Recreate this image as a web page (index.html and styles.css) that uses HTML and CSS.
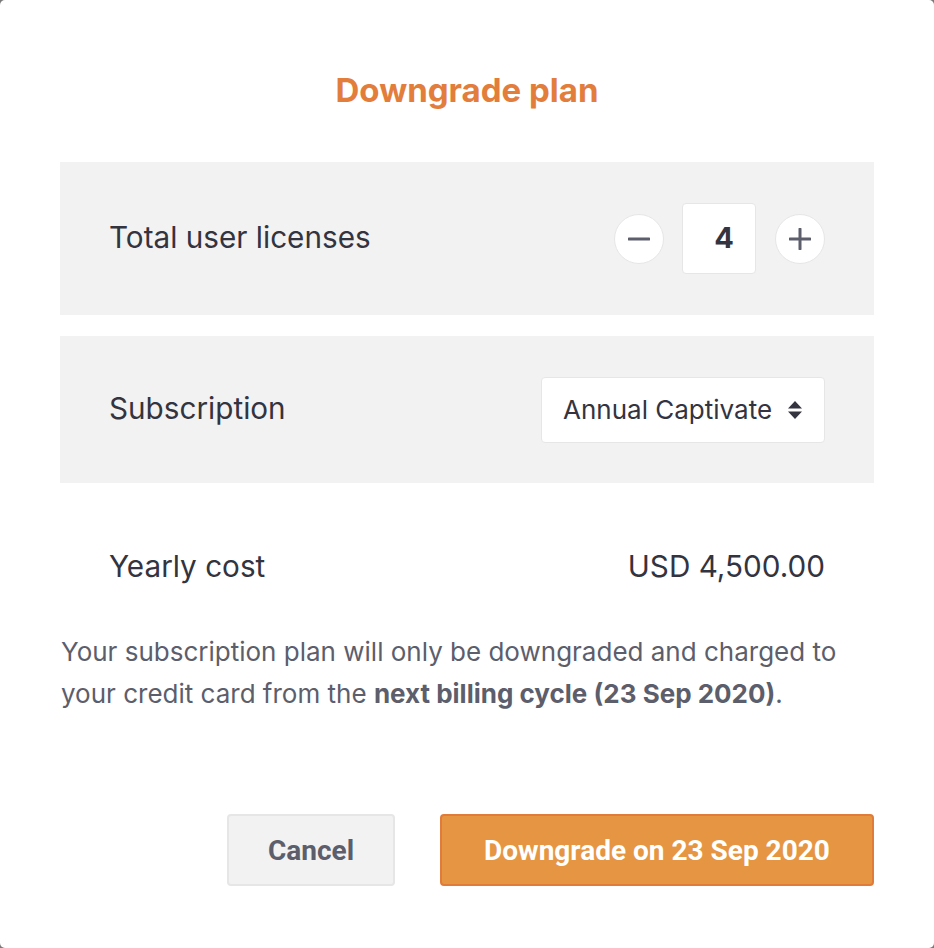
FILE: index.html
```html
<!DOCTYPE html>
<html>
<head>
<meta charset="utf-8">
<link rel="stylesheet" href="styles.css">
</head>
<body>
<div class="modal">
  <h1 class="title">Downgrade plan</h1>
  <div class="panel panel-licenses">
    <span class="label">Total user licenses</span>
    <div class="stepper">
      <button class="round-btn" aria-label="decrease">
        <svg width="22" height="22" viewBox="0 0 22 22"><path d="M1 11H21" stroke="#5c5e6c" stroke-width="3" stroke-linecap="round"/></svg>
      </button>
      <div class="count">4</div>
      <button class="round-btn" aria-label="increase">
        <svg width="22" height="22" viewBox="0 0 22 22"><path d="M1 11H21M11 1V21" stroke="#5c5e6c" stroke-width="3" stroke-linecap="round"/></svg>
      </button>
    </div>
  </div>
  <div class="panel panel-sub">
    <span class="label">Subscription</span>
    <div class="select">
      <span>Annual Captivate</span>
      <svg class="caret" width="16" height="20" viewBox="0 0 16 20"><path d="M8 1L15 8.5H1Z M8 19L15 11.5H1Z" fill="#33343f"/></svg>
    </div>
  </div>
  <div class="cost-row">
    <span class="label">Yearly cost</span>
    <span class="label">USD 4,500.00</span>
  </div>
  <p class="note">Your subscription plan will only be downgraded and charged to your credit card from the <b>next billing cycle (23 Sep 2020)</b>.</p>
  <div class="actions">
    <button class="btn btn-cancel">Cancel</button>
    <button class="btn btn-primary">Downgrade on 23 Sep 2020</button>
  </div>
</div>
</body>
</html>
```
FILE: styles.css
```css
html, body {
  margin: 0;
  padding: 0;
  background: #7a7a7a;
}
body {
  font-family: Inter, Roboto, "Liberation Sans", Arial, sans-serif;
}
.modal {
  width: 934px;
  height: 948px;
  box-sizing: border-box;
  background: #ffffff;
  border-radius: 5px;
  padding: 64px 60px 0 60px;
}
.title {
  margin: 0 0 46px 0;
  text-align: center;
  font-size: 33px;
  font-weight: 700;
  line-height: 52px;
  color: #e27d3b;
}
.panel {
  background: #f2f2f2;
  display: flex;
  align-items: center;
  justify-content: space-between;
  padding: 0 49px;
}
.panel-licenses {
  height: 153px;
  margin-bottom: 21px;
}
.panel-sub {
  height: 147px;
}
.label {
  font-size: 29.7px;
  color: #33343f;
  padding-bottom: 4px;
}
.cost-row .label {
  padding-bottom: 2px;
}
.stepper {
  display: flex;
  align-items: center;
}
.round-btn {
  width: 50px;
  height: 50px;
  border-radius: 50%;
  border: 1px solid #e6e6e6;
  background: #ffffff;
  padding: 0;
  display: flex;
  align-items: center;
  justify-content: center;
}
.count {
  width: 74px;
  height: 71px;
  box-sizing: border-box;
  margin: 0 19px 0 18px;
  border: 1px solid #e6e6e6;
  border-radius: 4px;
  background: #ffffff;
  display: flex;
  align-items: center;
  justify-content: center;
  font-size: 29px;
  font-weight: 700;
  color: #33343f;
  padding-left: 10px;
  padding-bottom: 2px;
}
.select {
  width: 284px;
  height: 66px;
  box-sizing: border-box;
  background: #ffffff;
  border: 1px solid #e6e6e6;
  border-radius: 4px;
  display: flex;
  align-items: center;
  justify-content: space-between;
  padding: 0 21px 0 21px;
  font-size: 26px;
  color: #33343f;
}
.caret {
  display: block;
}
.cost-row {
  display: flex;
  justify-content: space-between;
  align-items: center;
  padding: 0 49px;
  height: 168px;
}
.note {
  margin: -20px 0 0 1px;
  font-size: 26px;
  line-height: 42px;
  color: #5c5e6c;
}
.note b {
  font-weight: 700;
}
.actions {
  display: flex;
  justify-content: flex-end;
  gap: 45px;
  margin-top: 99px;
}
.btn {
  height: 72px;
  border-radius: 4px;
  font-family: Roboto, "Liberation Sans", Arial, sans-serif;
  font-size: 28px;
  font-weight: 700;
  padding: 0;
}
.btn-cancel {
  width: 168px;
  background: #f2f2f2;
  border: 2px solid #e6e6e6;
  color: #5c5e6c;
}
.btn-primary {
  width: 434px;
  background: #e69542;
  border: 2px solid #e07b39;
  color: #ffffff;
}
```
